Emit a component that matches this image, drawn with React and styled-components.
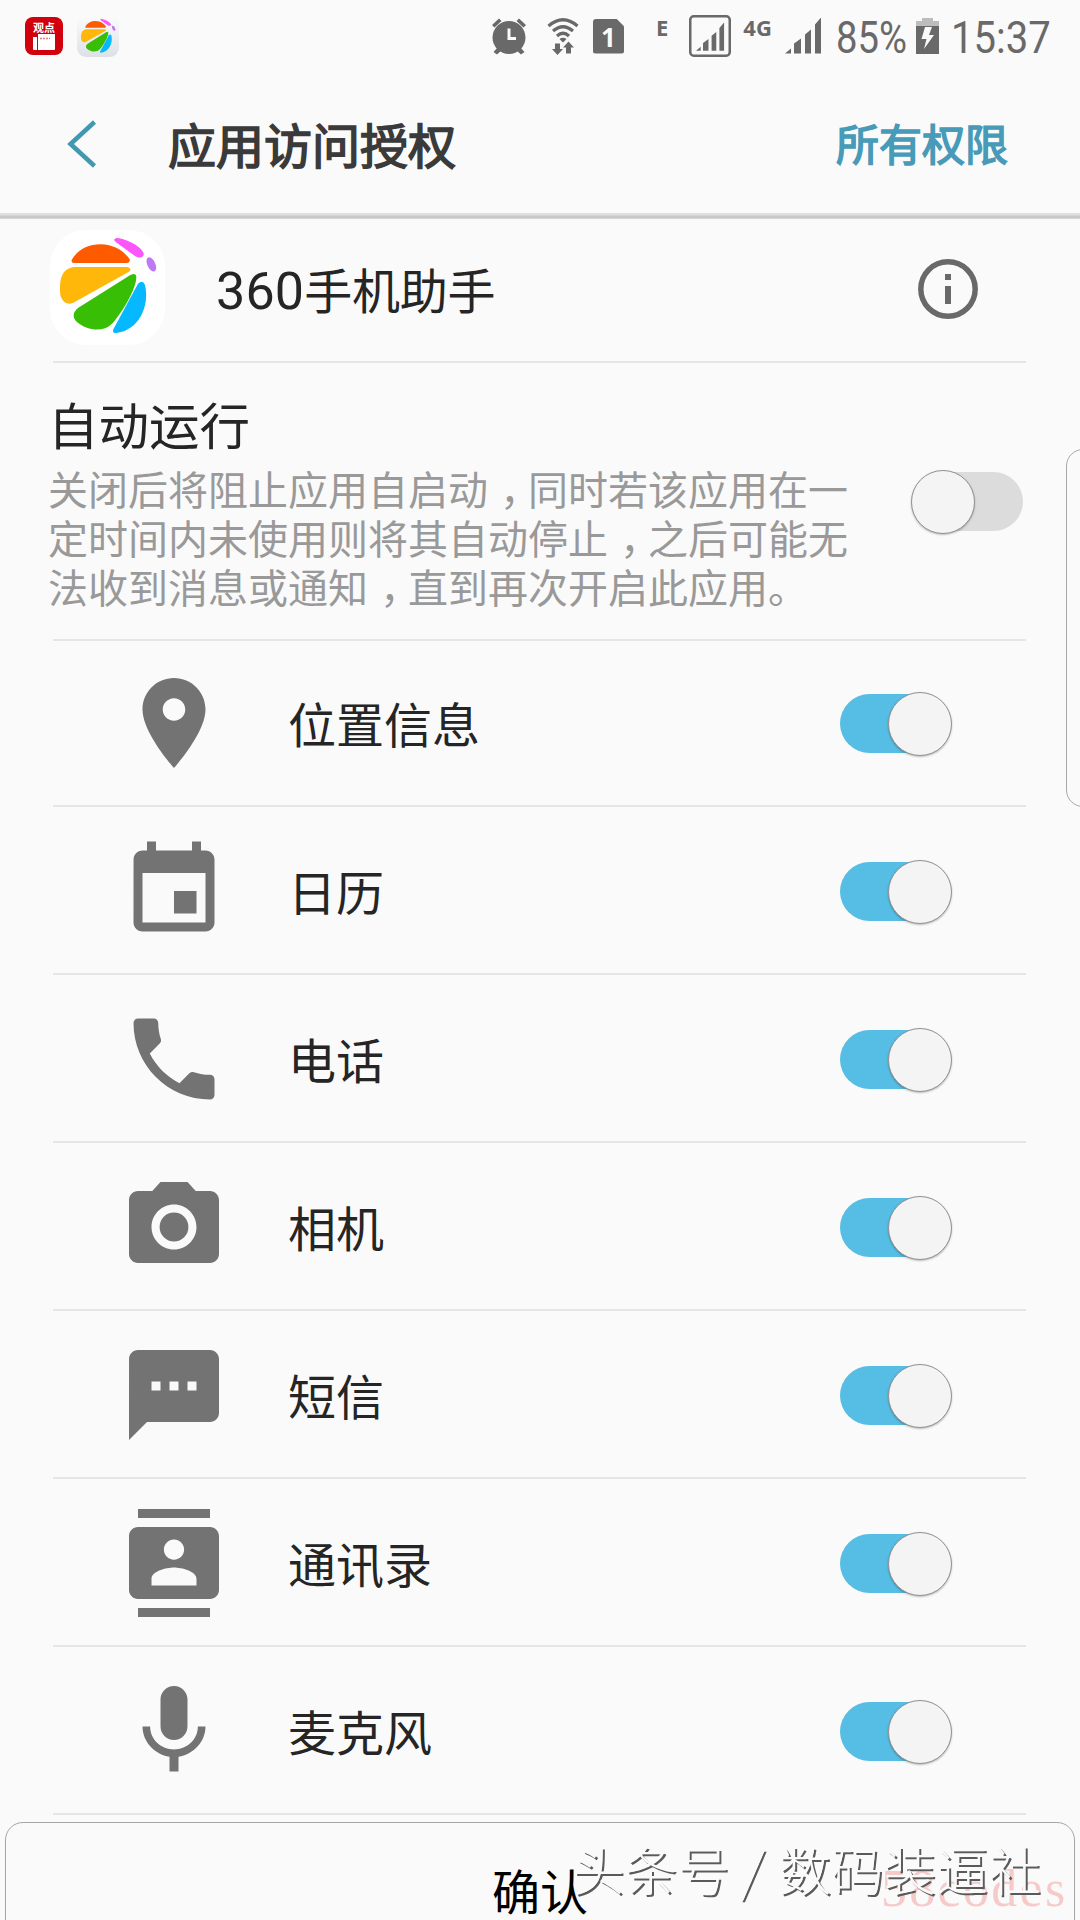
import React, { useState } from 'react'
import styled, { createGlobalStyle } from 'styled-components'

const permissions = [
    { id: 'location', label: '位置信息', icon: 'M12 2C8.13 2 5 5.13 5 9c0 5.25 7 13 7 13s7-7.75 7-13c0-3.87-3.13-7-7-7zm0 9.5c-1.38 0-2.5-1.12-2.5-2.5s1.12-2.5 2.5-2.5 2.5 1.12 2.5 2.5-1.12 2.5-2.5 2.5z' },
    { id: 'calendar', label: '日历', icon: 'M17 12h-5v5h5v-5zM16 1v2H8V1H6v2H5c-1.11 0-1.99.9-1.99 2L3 19c0 1.1.89 2 2 2h14c1.1 0 2-.9 2-2V5c0-1.1-.9-2-2-2h-1V1h-2zm3 18H5V8h14v11z' },
    { id: 'phone', label: '电话', icon: 'M20 15.5c-1.25 0-2.45-.2-3.57-.57-.35-.11-.74-.03-1.02.24l-2.2 2.2c-2.83-1.44-5.15-3.75-6.59-6.59l2.2-2.21c.28-.26.36-.65.25-1C8.7 6.45 8.5 5.25 8.5 4c0-.55-.45-1-1-1H4c-.55 0-1 .45-1 1 0 9.39 7.61 17 17 17 .55 0 1-.45 1-1v-3.5c0-.55-.45-1-1-1z' },
    { id: 'camera', label: '相机', icon: 'M12 8.8a3.2 3.2 0 1 0 0 6.4 3.2 3.2 0 1 0 0-6.4zM9 2L7.17 4H4c-1.1 0-2 .9-2 2v12c0 1.1.9 2 2 2h16c1.1 0 2-.9 2-2V6c0-1.1-.9-2-2-2h-3.17L15 2H9zm3 15c-2.76 0-5-2.24-5-5s2.24-5 5-5 5 2.24 5 5-2.24 5-5 5z' },
    { id: 'sms', label: '短信', icon: 'M20 2H4c-1.1 0-1.99.9-1.99 2L2 22l4-4h14c1.1 0 2-.9 2-2V4c0-1.1-.9-2-2-2zM9 11H7V9h2v2zm4 0h-2V9h2v2zm4 0h-2V9h2v2z' },
    { id: 'contacts', label: '通讯录', icon: 'M20 0H4v2h16V0zM4 24h16v-2H4v2zM20 4H4c-1.1 0-2 .9-2 2v12c0 1.1.9 2 2 2h16c1.1 0 2-.9 2-2V6c0-1.1-.9-2-2-2zm-8 2.75c1.24 0 2.25 1.01 2.25 2.25s-1.01 2.25-2.25 2.25S9.75 10.24 9.75 9 10.76 6.75 12 6.75zM17 17H7v-1.5c0-1.67 3.33-2.5 5-2.5s5 .83 5 2.5V17z' },
    { id: 'mic', label: '麦克风', icon: 'M12 14c1.66 0 2.99-1.34 2.99-3L15 5c0-1.66-1.34-3-3-3S9 3.34 9 5v6c0 1.66 1.34 3 3 3zm5.3-3c0 3-2.54 5.1-5.3 5.1S6.7 14 6.7 11H5c0 3.41 2.72 6.23 6 6.72V21h2v-3.28c3.28-.48 6-3.3 6-6.72h-1.7z' },
]

const Petals = () => (
    <>
        <path fill="#fe5a00" d="M125 150C142 120 172 103 212 103C254 104 284 125 299 148Q301 159 290 159H132Q123 158 125 150Z" />
        <path fill="#ffb70a" d="M132 171H290C301 171 305 180 297 185L130 278C112 287 96 275 91 255C87 215 92 176 132 171Z" />
        <path fill="#38bf05" d="M319 200C320 235 275 310 245 342C220 368 170 362 140 335C125 320 130 305 145 293L300 196Q318 186 319 200Z" />
        <path fill="#06b8ff" d="M324 221Q338 207 345 225C360 290 325 362 258 369Q246 370 250 358Z" />
        <path fill="#fb55fb" d="M252 90Q255 82 268 85C300 92 335 112 341 130C343 143 328 146 315 138L258 97Z" />
        <ellipse fill="#bf78f5" cx="364" cy="163" rx="12" ry="23" transform="rotate(-25 364 163)" />
    </>
)

const SignalBars = () => (
    <path d="M0 36L6 31V36ZM9 36V26L16 21V36ZM20 36V17L26 12V36ZM30 36V7L36 0V36Z" transform="translate(0 -0.5)" />
)

const Toggle = ({ on, onClick }) => (
    <Switch role="switch" aria-checked={on} onClick={onClick} $on={on}>
        <Track $on={on} />
        <Knob $on={on} />
    </Switch>
)

const App = () => {
    const [autoRun, setAutoRun] = useState(false)
    const [granted, setGranted] = useState(() => permissions.map(() => true))

    const toggle = (index) => setGranted(granted.map((value, i) => (i === index ? !value : value)))

    return (
        <Screen>
            <GlobalStyle />
            <StatusBar>
                <NewsBadge>
                    <span>观点</span>
                    <svg width="22" height="17" viewBox="0 0 22 17">
                        <path fill="#fff" d="M0 3H4V16H1Q0 16 0 15ZM5 0H22V15Q22 16 21 16H5Z" />
                        <path stroke="#d98080" strokeWidth="1.5" strokeDasharray="2 1" d="M7 4.5H17" />
                    </svg>
                </NewsBadge>
                <SmallLogo viewBox="60 60 345 345"><Petals /></SmallLogo>
                <StatusIcon $left={372} width="36" height="37" viewBox="0 0 36 37">
                    <circle cx="18" cy="19.5" r="16.5" />
                    <path d="M1 7L8 0.5L10.5 3L3.5 9.5ZM35 7L28 0.5L25.5 3L32.5 9.5ZM2.5 34L7 29L11 32L6 36.5ZM33.5 34L29 29L25 32L30 36.5Z" />
                    <path d="M18 10.5V20.5H25" fill="none" stroke="#fafafa" strokeWidth="3" />
                </StatusIcon>
                <StatusIcon $left={20} width="32" height="37" viewBox="0 0 32 37">
                    <path fill="none" stroke="#696969" strokeWidth="3.2" d="M1.5 8Q16 -4.500 30.500 8M6 13Q16 4.500 26 13M10 18Q16 12.500 22 18" />
                    <path d="M12.500 21Q16 18.500 19.500 21L16 24.500ZM8 25.500H13V31H16L10.500 37L5 31H8ZM19 35.500H24V29.500H27L21.500 23.500L16 29.500H19Z" />
                </StatusIcon>
                <SimBadge>1</SimBadge>
                <NetLabel $left={32}>E</NetLabel>
                <StatusIcon $left={21} width="42" height="42" viewBox="0 0 42 42">
                    <rect x="1.250" y="1.250" width="39.500" height="39.500" rx="3.500" fill="none" stroke="#696969" strokeWidth="2.500" />
                    <g transform="translate(7 8) scale(.78)"><SignalBars /></g>
                </StatusIcon>
                <NetLabel $left={12}>4G</NetLabel>
                <StatusIcon $left={13} width="37" height="36" viewBox="0 0 37 36"><SignalBars /></StatusIcon>
                <Percent>85%</Percent>
                <StatusIcon $left={10} width="23" height="36" viewBox="0 0 23 36">
                    <path fill="#bdbdbd" d="M6 0H17V3H23V9H0V3H6Z" />
                    <path d="M0 8H23V36H0Z" />
                    <path fill="#fafafa" d="M9 9L16 9L13 17H18L8 31L10.500 21H5.500Z" />
                </StatusIcon>
                <Clock>15:37</Clock>
            </StatusBar>

            <Header>
                <BackIcon width="30" height="48" viewBox="0 0 30 48">
                    <path fill="none" stroke="#4298ae" strokeWidth="4.500" d="M27.500 2L3.500 24L27.500 46" />
                </BackIcon>
                <Title>应用访问授权</Title>
                <AllLink>所有权限</AllLink>
            </Header>

            <AppRow>
                <AppLogo viewBox="60 60 345 345"><Petals /></AppLogo>
                <AppName><Digits>360</Digits>手机助手</AppName>
                <svg width="60" height="60" viewBox="0 0 60 60" fill="#696969">
                    <circle cx="30" cy="30" r="27.200" fill="none" stroke="#696969" strokeWidth="5.500" />
                    <path d="M27 15H33V21H27ZM27 27H33V45H27Z" />
                </svg>
            </AppRow>

            <AutoRunRow>
                <AutoRunText>
                    <AutoRunTitle>自动运行</AutoRunTitle>
                    <Description>
                        关闭后将阻止应用自启动<Comma>，</Comma>同时若该应用在一<br />
                        定时间内未使用则将其自动停止<Comma>，</Comma>之后可能无<br />
                        法收到消息或通知<Comma>，</Comma>直到再次开启此应用。
                    </Description>
                </AutoRunText>
                <Toggle on={autoRun} onClick={() => setAutoRun(!autoRun)} />
            </AutoRunRow>

            {permissions.map(({ id, label, icon }, i) => (
                <PermissionRow key={id} $first={i === 0}>
                    <PermissionIcon viewBox="0 0 24 24"><path fillRule="evenodd" d={icon} /></PermissionIcon>
                    <PermissionLabel>{label}</PermissionLabel>
                    <Toggle on={granted[i]} onClick={() => toggle(i)} />
                </PermissionRow>
            ))}

            <ConfirmSheet>确认</ConfirmSheet>
            <EdgeHandle />
            <SiteMark>58codes</SiteMark>
            <AuthorMark>头条号 <Slash>/</Slash> 数码装逼社</AuthorMark>
        </Screen>
    )
}

export default App


const GlobalStyle = createGlobalStyle`
    * {
        box-sizing: border-box;
    }
    body {
        margin: 0;
        background: #fafafa;
    }
    svg {
        display: block;
        flex-shrink: 0;
    }
`;

const Screen = styled.div`
    position: relative;
    width: 1080px;
    height: 1920px;
    overflow: hidden;
    background: #fafafa;
    color: #252525;
    font-family: "Noto Sans CJK SC", sans-serif;
    display: flex;
    flex-direction: column;
`;

const StatusBar = styled.div`
    height: 72px;
    flex-shrink: 0;
    padding: 0 0 0 25px;
    display: flex;
    align-items: center;
    white-space: nowrap;
    color: #696969;
`;

const NewsBadge = styled.div`
    width: 38px;
    height: 38px;
    flex-shrink: 0;
    border-radius: 8px;
    background: #d0000c;
    color: #fff;
    display: flex;
    flex-direction: column;
    align-items: center;
    padding-top: 4px;
    span {
        font-size: 11px;
        font-weight: 700;
        line-height: 13px;
    }
`;

const SmallLogo = styled.svg`
    width: 42px;
    height: 41px;
    margin-left: 14px;
    border-radius: 9px;
    background: linear-gradient(#fbfbfc, #dde1e6);
`;

const StatusIcon = styled.svg`
    margin-left: ${props => props.$left}px;
    fill: #696969;
`;

const SimBadge = styled.div`
    width: 31px;
    height: 35px;
    margin-left: 14px;
    flex-shrink: 0;
    border-radius: 3px;
    background: #696969;
    clip-path: polygon(0 0, 75% 0, 100% 22%, 100% 100%, 0 100%);
    color: #fafafa;
    font: 700 26px/37px "Open Sans", sans-serif;
    text-align: center;
`;

const NetLabel = styled.span`
    margin: 0 0 18px ${props => props.$left}px;
    font: 700 22px/22px "Open Sans", sans-serif;
`;

const Percent = styled.span`
    width: 70px;
    margin-left: 14px;
    font: 400 45px/72px Roboto, sans-serif;
    padding-top: 3px;
    transform: scaleX(0.85);
    transform-origin: left;
`;

const Clock = styled(Percent)`
    width: 100px;
    margin-left: 12px;
    transform: scaleX(0.89);
`;

const Header = styled.div`
    height: 147px;
    flex-shrink: 0;
    padding: 0 72px 1px 67px;
    display: flex;
    align-items: center;
    background: linear-gradient(#fafafa 0 141px, #e0e0e0 141px 143px, #c9c9c9 144px 146px, #e4e4e4 147px);
`;

const BackIcon = styled.svg`
    margin-bottom: 2px;
`;

/* regular glyphs thickened by a stroke, the way the system fakes its bold */
const Title = styled.div`
    flex-grow: 1;
    margin: 0 0 4px 71px;
    font-size: 48px;
    line-height: 60px;
    -webkit-text-stroke: 1.6px #3a3a3a;
    color: #3a3a3a;
`;

const AllLink = styled.div`
    margin-bottom: 6px;
    font-size: 43px;
    line-height: 60px;
    -webkit-text-stroke: 1.5px #479ab8;
    color: #479ab8;
`;

const Row = styled.div`
    flex-shrink: 0;
    display: flex;
    align-items: center;
    margin: 0 54px 0 53px;
    border-bottom: 2px solid #e5e5e5;
`;

const AppRow = styled(Row)`
    height: 144px;
    padding-right: 48px;
    padding-bottom: 2px;
`;

const AppLogo = styled.svg`
    width: 115px;
    height: 115px;
    margin-left: -3px;
    margin-bottom: 4px;
    border-radius: 36px;
    background: #fff;
`;

const AppName = styled.div`
    flex-grow: 1;
    margin: 2px 0 0 51px;
    font-size: 48px;
    line-height: 60px;
    letter-spacing: -0.3px;
`;

const Digits = styled.span`
    font-family: Roboto, sans-serif;
    font-size: 52px;
    letter-spacing: 0.2px;
`;

const AutoRunRow = styled(Row)`
    height: 278px;
    align-items: flex-start;
    justify-content: space-between;
    padding: 30px 3px 0 0;
    > button {
        margin-top: 77px;
    }
`;

const AutoRunText = styled.div`
    margin-left: -5px;
`;

const AutoRunTitle = styled.div`
    font-size: 50.500px;
    line-height: 60px;
`;

const Description = styled.div`
    margin-top: 11px;
    font-size: 40px;
    line-height: 49px;
    white-space: nowrap;
    color: #999;
`;

/* full-width comma sits in the middle of its cell */
const Comma = styled.span`
    display: inline-block;
    width: 40px;
    text-indent: 12px;
`;

const PermissionRow = styled(Row)`
    height: ${props => props.$first ? 166 : 168}px;
    padding: ${props => props.$first ? 0 : 2}px 74px 0 67px;
    > button {
        margin-top: 2px;
    }
`;

const PermissionIcon = styled.svg`
    width: 108px;
    height: 108px;
    fill: #737373;
`;

const PermissionLabel = styled.div`
    flex-grow: 1;
    margin: 0 0 2px 60px;
    font-size: 48px;
    line-height: 60px;
`;

const Switch = styled.button`
    width: 112px;
    height: 64px;
    flex-shrink: 0;
    padding: 0;
    border: 0;
    background: none;
    display: grid;
    align-items: center;
    justify-items: ${props => props.$on ? 'end' : 'start'};
    cursor: pointer;
`;

const Track = styled.span`
    grid-area: 1 / 1;
    justify-self: ${props => props.$on ? 'start' : 'end'};
    width: 108px;
    height: 59px;
    margin-bottom: 2px;
    border-radius: 30px;
    background: ${props => props.$on ? '#56bee4' : '#dcdcdc'};
`;

const Knob = styled.span`
    grid-area: 1 / 1;
    width: 64px;
    height: 64px;
    border-radius: 50%;
    border: 1px solid #929292;
    background: #f4f4f4;
    box-shadow: 0 1px 2px rgba(0, 0, 0, 0.25);
`;

const ConfirmSheet = styled.div`
    height: 120px;
    flex-shrink: 0;
    margin: 7px 5px 0;
    padding-top: 36px;
    border: 1px solid #a5a5a5;
    border-radius: 18px 18px 0 0;
    font-size: 48px;
    line-height: 60px;
    text-align: center;
    color: #000;
`;

const EdgeHandle = styled.div`
    position: absolute;
    top: 449px;
    right: -20px;
    width: 34px;
    height: 358px;
    border: 1.500px solid #a8a8a8;
    border-radius: 20px;
`;

const AuthorMark = styled.div`
    position: absolute;
    left: 572px;
    top: 1835px;
    font-size: 52.500px;
    line-height: 66px;
    font-weight: 300;
    white-space: nowrap;
    color: #fafafa;
    text-shadow: 2px 2px 0 #5a5a5a;
`;

const Slash = styled.span`
    display: inline-block;
    margin: 0 3px 0 2px;
    transform: skewX(-5deg);
`;

const SiteMark = styled.div`
    position: absolute;
    left: 881px;
    top: 1859px;
    font: 400 52px/60px "Liberation Serif", serif;
    letter-spacing: 2.300px;
    color: rgba(240, 80, 80, 0.28);
`;
